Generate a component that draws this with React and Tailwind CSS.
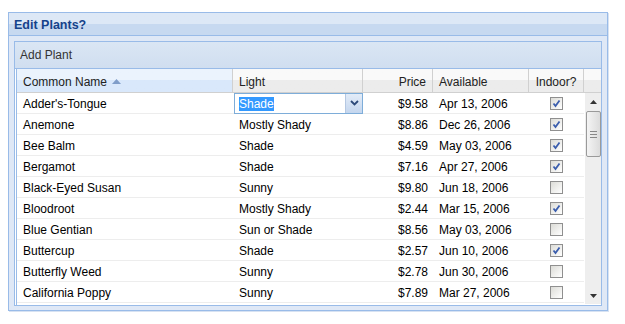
import React from 'react';

const plants = [
  { name: "Adder's-Tongue", light: 'Shade', price: '$9.58', date: 'Apr 13, 2006', indoor: true },
  { name: 'Anemone', light: 'Mostly Shady', price: '$8.86', date: 'Dec 26, 2006', indoor: true },
  { name: 'Bee Balm', light: 'Shade', price: '$4.59', date: 'May 03, 2006', indoor: true },
  { name: 'Bergamot', light: 'Shade', price: '$7.16', date: 'Apr 27, 2006', indoor: true },
  { name: 'Black-Eyed Susan', light: 'Sunny', price: '$9.80', date: 'Jun 18, 2006', indoor: false },
  { name: 'Bloodroot', light: 'Mostly Shady', price: '$2.44', date: 'Mar 15, 2006', indoor: true },
  { name: 'Blue Gentian', light: 'Sun or Shade', price: '$8.56', date: 'May 03, 2006', indoor: false },
  { name: 'Buttercup', light: 'Shade', price: '$2.57', date: 'Jun 10, 2006', indoor: true },
  { name: 'Butterfly Weed', light: 'Sunny', price: '$2.78', date: 'Jun 30, 2006', indoor: false },
  { name: 'California Poppy', light: 'Sunny', price: '$7.89', date: 'Mar 27, 2006', indoor: false },
];

function CheckBox({ checked }) {
  return (
    <div className="w-[13px] h-[13px] border border-[#8f8f8f] bg-gradient-to-br from-[#dcdcd7] to-[#ffffff] flex items-center justify-center">
      {checked && (
        <svg width="9" height="9" viewBox="0 0 9 9">
          <path d="M1.5 4.5 L3.5 7 L7.5 1.5" fill="none" stroke="#3a5dad" strokeWidth="1.8" />
        </svg>
      )}
    </div>
  );
}

function HeaderCell({ children, className = '', sorted }) {
  return (
    <div
      className={`h-full flex items-center pt-[2px] px-[6px] border-r border-[#d0d0d0] ${
        sorted ? 'bg-gradient-to-b from-[#ebf3fd] from-50% to-[#d9e8fb] to-50%' : 'bg-gradient-to-b from-[#f9f9f9] from-50% to-[#ececec] to-50%'
      } ${className}`}
    >
      {children}
    </div>
  );
}

export default function App() {
  return (
    <div className="w-[625px] h-[324px] bg-white pt-[12px] pl-[8px] text-[12px] text-black" style={{ fontFamily: '"Liberation Sans", Arial, sans-serif' }}>
      <div className="w-[600px] h-[299px] border border-[#99bbe8] flex flex-col shadow-[1px_1px_0_#d7e2f2]">
        {/* panel header */}
        <div className="h-[23px] border-b border-[#99bbe8] bg-gradient-to-b from-[#dde8f6] from-50% to-[#c7d9f0] to-50% flex items-center pt-[2px] px-[5px]">
          <span className="font-bold text-[#15428b] text-[12.5px]">Edit Plants?</span>
        </div>
        {/* body */}
        <div className="flex-1 bg-[#dfe8f6] pt-[5px] px-[5px] pb-[4px]">
          <div className="h-full border border-[#99bbe8] flex flex-col bg-white">
            {/* toolbar */}
            <div className="h-[27px] border-b border-[#99bbe8] bg-gradient-to-b from-[#dae6f4] to-[#d0def0] flex items-center px-[5px] text-[#333]">
              Add Plant
            </div>
            <div className="flex-1 flex flex-col ml-px border-l border-[#99bbe8] overflow-hidden">
              {/* column headers */}
              <div className="h-[24px] flex border-b border-[#d0d0d0] text-[#222]">
                <HeaderCell sorted className="w-[216px]">
                  <span>Common Name</span>
                  <svg width="9" height="5" viewBox="0 0 9 5" className="ml-[5px]">
                    <path d="M0 5 L4.5 0 L9 5 Z" fill="#7f9dc9" />
                  </svg>
                </HeaderCell>
                <HeaderCell className="w-[130px]">Light</HeaderCell>
                <HeaderCell className="w-[70px] justify-end">Price</HeaderCell>
                <HeaderCell className="w-[96px]">Available</HeaderCell>
                <HeaderCell className="w-[55px] justify-center">Indoor?</HeaderCell>
                <div className="flex-1 bg-gradient-to-b from-[#f9f9f9] from-50% to-[#ececec] to-50%" />
              </div>
              {/* rows + scrollbar */}
              <div className="flex-1 flex">
                <div className="w-[567px] flex flex-col">
                  {plants.map((p, i) => (
                    <div key={p.name} className="h-[21px] flex items-center border-b border-[#ededed] shrink-0">
                      <div className="w-[216px] px-[6px] pt-[2px] truncate">{p.name}</div>
                      <div className="w-[130px] h-full flex items-center">
                        {i === 0 ? (
                          <div className="ml-px w-[129px] h-[21px] border border-[#7eadd9] bg-white flex items-center">
                            <div className="flex-1 pl-[4px] pt-[2px]">
                              <span className="bg-[#3399ff] text-white">Shade</span>
                            </div>
                            <div className="w-[17px] h-full border-l border-[#b5c8e2] bg-gradient-to-b from-[#e3ecf8] to-[#c4d6ee] flex items-center justify-center">
                              <svg width="9" height="6" viewBox="0 0 9 6">
                                <path d="M1 1 L4.5 4.5 L8 1" fill="none" stroke="#2d4a7a" strokeWidth="1.8" />
                              </svg>
                            </div>
                          </div>
                        ) : (
                          <span className="px-[6px] pt-[2px]">{p.light}</span>
                        )}
                      </div>
                      <div className="w-[70px] px-[5px] pt-[2px] text-right">{p.price}</div>
                      <div className="w-[96px] px-[6px] pt-[2px]">{p.date}</div>
                      <div className="w-[55px] flex justify-center">
                        <CheckBox checked={p.indoor} />
                      </div>
                    </div>
                  ))}
                </div>
                {/* scrollbar */}
                <div className="w-[16px] ml-px bg-[#eeeeee] flex flex-col items-center h-[211px]">
                  <div className="h-[17px] w-full flex items-center justify-center">
                    <svg width="7" height="4" viewBox="0 0 7 4"><path d="M0 4 L3.5 0 L7 4 Z" fill="#333" /></svg>
                  </div>
                  <div className="mt-[1px] w-[15px] h-[46px] rounded-[2px] border border-[#9a9a9a] bg-gradient-to-r from-[#f4f4f4] to-[#dcdcdc] flex flex-col items-center justify-center gap-[2px]">
                    <div className="w-[7px] h-px bg-[#888]" />
                    <div className="w-[7px] h-px bg-[#888]" />
                    <div className="w-[7px] h-px bg-[#888]" />
                  </div>
                  <div className="flex-1" />
                  <div className="h-[17px] w-full flex items-center justify-center">
                    <svg width="7" height="4" viewBox="0 0 7 4"><path d="M0 0 L3.5 4 L7 0 Z" fill="#333" /></svg>
                  </div>
                </div>
              </div>
            </div>
          </div>
        </div>
      </div>
    </div>
  );
}
